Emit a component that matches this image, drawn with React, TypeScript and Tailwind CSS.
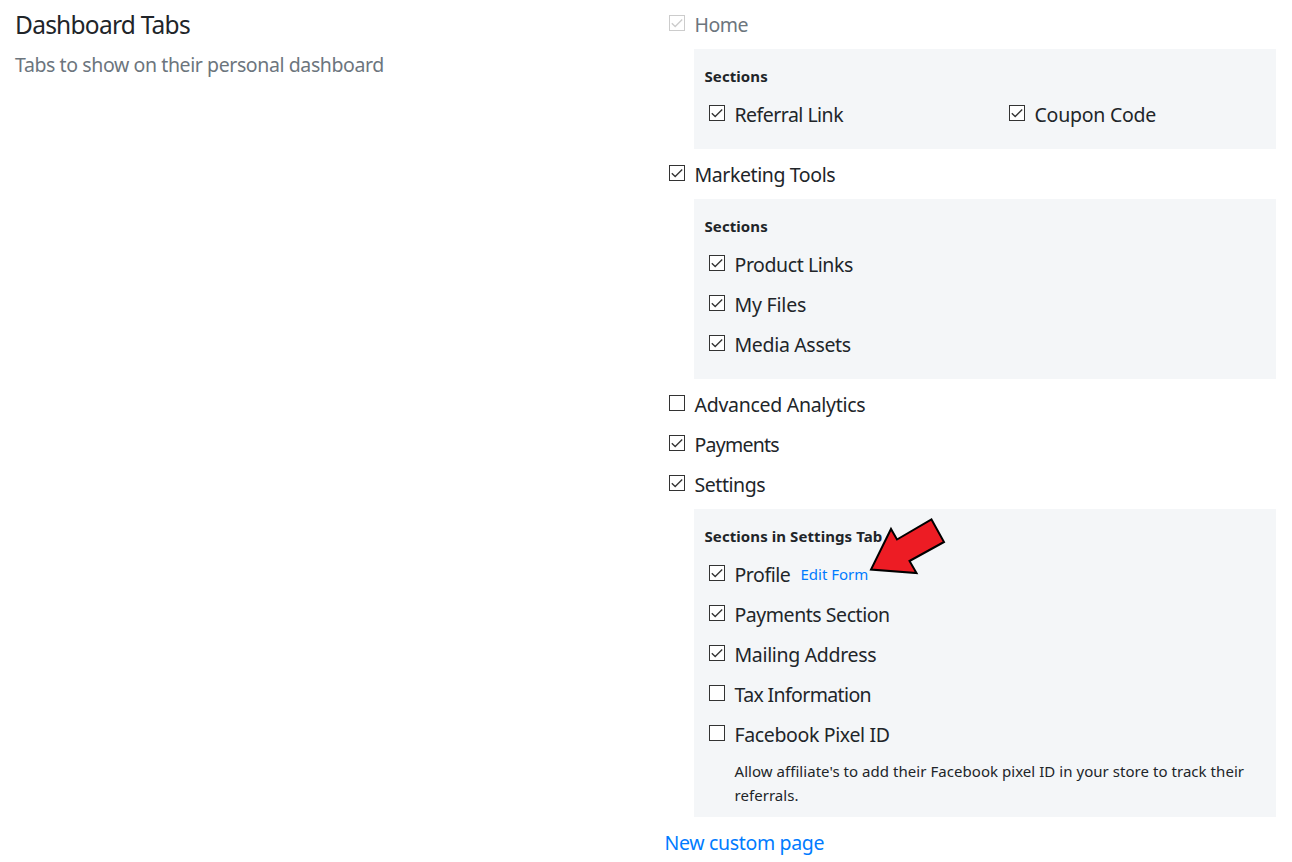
import type { ReactNode } from "react";

function Box({ checked, muted }: { checked?: boolean; muted?: boolean }) {
  return (
    <span
      role="checkbox"
      aria-checked={!!checked}
      className={`mb-1 flex size-4 shrink-0 border bg-white ${muted ? "border-[#cccccc] text-[#cccccc]" : "border-[#333333] text-[#333333]"}`}
    >
      {checked && (
        <svg viewBox="0 0 14 14" className="size-3.5" fill="none" stroke="currentColor" strokeWidth="1.35">
          <path d="M1.8 7.2 5.2 10.6 12.2 3.6" />
        </svg>
      )}
    </span>
  );
}

type RowProps = { label: string; tracking: string; checked?: boolean; muted?: boolean; children?: ReactNode };

function Row({ label, tracking, checked, muted, children }: RowProps) {
  return (
    <div className={`flex h-10 items-center pl-1 ${muted ? "text-[#6c757d]" : "text-[#212529]"}`}>
      <Box checked={checked} muted={muted} />
      <span className={`ml-[9.5px] whitespace-nowrap text-[19.5px] leading-[30px] ${tracking}`}>{label}</span>
      {children}
    </div>
  );
}

function Panel({ title, children }: { title: string; children: ReactNode }) {
  return (
    <section className="mt-1 mb-1.5 ml-[29px] bg-[#f4f6f8] pt-[15px] pl-[11px]">
      <h2 className="mb-[7px] -ml-[0.5px] text-[15px] leading-6 font-bold tracking-[0.08px]">{title}</h2>
      {children}
    </section>
  );
}

function Arrow() {
  return (
    <svg className="absolute -top-[46px] left-[66px] h-[62px] w-[80px]" viewBox="867 516 80 62">
      <path d="M931.5 519.5 944 542 909.5 561 916.5 573 871 569.5 891 529 897 539.5Z" fill="#ed1c24" stroke="#000" strokeWidth="2" />
    </svg>
  );
}

export default function App() {
  return (
    <main className="flex h-[862px] w-[1292px] overflow-hidden bg-white font-['Noto_Sans',sans-serif] text-[#212529]">
      <div className="w-[665px] shrink-0 pt-2.5 pl-[15px]">
        <h1 className="text-[24.5px] leading-[30px] tracking-[-0.75px]">Dashboard Tabs</h1>
        <p className="mt-2.5 text-[19.5px] leading-[30px] tracking-[-0.4px] text-[#6c757d]">Tabs to show on their personal dashboard</p>
      </div>
      <div className="w-[611px] pt-[5px]">
        <Row label="Home" tracking="tracking-[-0.5px]" checked muted />
        <Panel title="Sections">
          <div className="grid grid-cols-[300px_1fr] pb-3.5">
            <Row label="Referral Link" tracking="tracking-[-0.52px]" checked />
            <Row label="Coupon Code" tracking="tracking-[-0.24px]" checked />
          </div>
        </Panel>
        <Row label="Marketing Tools" tracking="tracking-[-0.4px]" checked />
        <Panel title="Sections">
          <div className="pb-3.5">
            <Row label="Product Links" tracking="tracking-[-0.42px]" checked />
            <Row label="My Files" tracking="tracking-[-0.2px]" checked />
            <Row label="Media Assets" tracking="tracking-[-0.33px]" checked />
          </div>
        </Panel>
        <Row label="Advanced Analytics" tracking="tracking-[-0.28px]" />
        <Row label="Payments" tracking="tracking-[-0.75px]" checked />
        <Row label="Settings" tracking="tracking-[-0.45px]" checked />
        <Panel title="Sections in Settings Tab">
          <Row label="Profile" tracking="w-14 tracking-[-0.45px]" checked>
            <span className="relative mb-0.5 ml-2.5 text-[15px] leading-6 whitespace-nowrap text-[#007bff]">
              <a href="#">Edit Form</a>
              <Arrow />
            </span>
          </Row>
          <Row label="Payments Section" tracking="tracking-[-0.45px]" checked />
          <Row label="Mailing Address" tracking="tracking-[-0.33px]" checked />
          <Row label="Tax Information" tracking="tracking-[-0.63px]" />
          <Row label="Facebook Pixel ID" tracking="tracking-[-0.36px]" />
          <p className="mt-1 ml-[29.5px] pb-2.5 text-[15px] leading-6 tracking-[0.045px]">
            <span className="whitespace-nowrap">Allow affiliate&apos;s to add their Facebook pixel ID in your store to track their</span>
            <br />
            referrals.
          </p>
        </Panel>
        <a href="#" className="mt-[11px] -ml-[0.5px] block text-[19.5px] leading-[30px] tracking-[-0.33px] text-[#007bff]">New custom page</a>
      </div>
    </main>
  );
}
